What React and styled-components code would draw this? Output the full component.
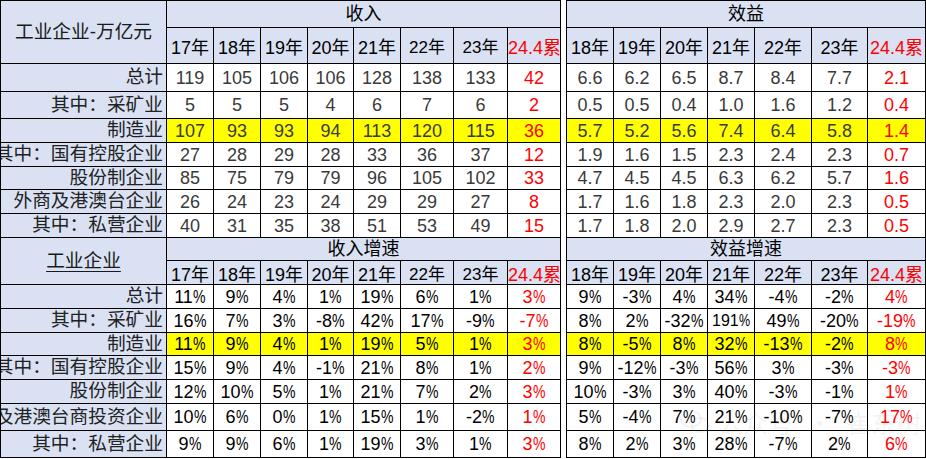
import React from "react";
import styled, { createGlobalStyle } from "styled-components";

const GlobalStyle = createGlobalStyle`
  html, body {
    margin: 0;
    padding: 0;
    background: #ffffff;
  }
  body {
    font-family: "Liberation Sans", "Noto Sans CJK SC", sans-serif;
  }
`;

const BLUE = "#d9e1f2";
const YELLOW = "#ffff00";
const RED = "#ff0000";

const Wrap = styled.div`
  position: relative;
  width: 926px;
  height: 459px;
  overflow: hidden;
`;

const Table = styled.table`
  border-collapse: collapse;
  table-layout: fixed;
  width: 925px;
  font-family: "Liberation Sans", "Noto Sans CJK SC", sans-serif;
`;

const Row = styled.tr`
  height: ${(p) => p.$h}px;
`;

const Cell = styled.td`
  border: 1px solid #000;
  padding: 0;
  line-height: 1;
  vertical-align: middle;
  text-align: center;
  white-space: nowrap;
  overflow: hidden;
  font-size: ${(p) => p.$size || 18}px;
  color: ${(p) => p.$color || "#111"};
  background: ${(p) => p.$bg || "#fff"};
`;

const HeadCell = styled(Cell)`
  background: ${BLUE};
  color: ${(p) => p.$color || "#000"};
  padding-top: ${(p) => p.$pt || 0}px;
`;

const TitleCell = styled(HeadCell)`
  font-size: 18.7px;
  color: #1a1a1a;
  text-decoration: ${(p) => (p.$underline ? "underline" : "none")};
  text-underline-offset: 4px;
`;

const LabelCell = styled.td`
  border: 1px solid #000;
  background: ${BLUE};
  padding: 0 3px 0 0;
  line-height: 1;
  font-size: 18.7px;
  color: #222;
  white-space: nowrap;
  overflow: hidden;
  direction: rtl;
  text-align: right;
`;

const LabelText = styled.span`
  direction: ltr;
  unicode-bidi: isolate;
`;

const Pct = styled.span`
  display: inline-block;
  transform: scaleX(0.78);
  transform-origin: left center;
  margin-right: -3px;
`;

const Spacer = styled.td`
  border-left: 1px solid #000;
  border-right: 1px solid #000;
  border-top: none;
  border-bottom: none;
  background: #fff;
  padding: 0;
`;

const Watermark = styled.div`
  position: absolute;
  left: 680px;
  top: 404px;
  display: flex;
  align-items: center;
  gap: 8px;
  font-family: "Noto Sans CJK SC", sans-serif;
  font-size: 25px;
  color: rgba(120, 120, 120, 0.09);
  pointer-events: none;
`;

const Dot = styled.span`
  margin: 0 6px;
`;

const incomeYears = ["17年", "18年", "19年", "20年", "21年", "22年", "23年"];
const effYears = ["18年", "19年", "20年", "21年", "22年", "23年"];
const colWidths = [166, 47, 47, 47, 46, 47, 53, 54, 53, 6, 47, 47, 47, 47, 57, 56, 58];

const table1 = [
  { label: "总计", h: 28, inc: [119, 105, 106, 106, 128, 138, 133, 42], eff: ["6.6", "6.2", "6.5", "8.7", "8.4", "7.7", "2.1"] },
  { label: "其中：采矿业", h: 27, inc: [5, 5, 5, 4, 6, 7, 6, 2], eff: ["0.5", "0.5", "0.4", "1.0", "1.6", "1.2", "0.4"] },
  { label: "制造业", h: 24, hl: true, inc: [107, 93, 93, 94, 113, 120, 115, 36], eff: ["5.7", "5.2", "5.6", "7.4", "6.4", "5.8", "1.4"] },
  { label: "其中：国有控股企业", h: 24, inc: [27, 28, 29, 28, 33, 36, 37, 12], eff: ["1.9", "1.6", "1.5", "2.3", "2.4", "2.3", "0.7"] },
  { label: "股份制企业", h: 23, inc: [85, 75, 79, 79, 96, 105, 102, 33], eff: ["4.7", "4.5", "4.5", "6.3", "6.2", "5.7", "1.6"] },
  { label: "外商及港澳台企业", h: 24, inc: [26, 24, 23, 24, 29, 29, 27, 8], eff: ["1.7", "1.6", "1.8", "2.3", "2.0", "2.3", "0.5"] },
  { label: "其中：私营企业", h: 24, inc: [40, 31, 35, 38, 51, 53, 49, 15], eff: ["1.7", "1.8", "2.0", "2.9", "2.7", "2.3", "0.5"] },
];

const table2 = [
  { label: "总计", h: 24, pct: true, inc: [11, 9, 4, 1, 19, 6, 1, 3], eff: [9, -3, 4, 34, -4, -2, 4] },
  { label: "其中：采矿业", h: 24, pct: true, inc: [16, 7, 3, -8, 42, 17, -9, -7], eff: [8, 2, -32, 191, 49, -20, -19] },
  { label: "制造业", h: 23, pct: true, hl: true, inc: [11, 9, 4, 1, 19, 5, 1, 3], eff: [8, -5, 8, 32, -13, -2, 8] },
  { label: "其中：国有控股企业", h: 24, pct: true, inc: [15, 9, 4, -1, 21, 8, 1, 2], eff: [9, -12, -3, 56, 3, -3, -3] },
  { label: "股份制企业", h: 24, pct: true, inc: [12, 10, 5, 1, 21, 7, 2, 3], eff: [10, -3, 3, 40, -3, -1, 1] },
  { label: "外商及港澳台商投资企业", h: 27, pct: true, inc: [10, 6, 0, 1, 15, 1, -2, 1], eff: [5, -4, 7, 21, -10, -7, 17] },
  { label: "其中：私营企业", h: 27, pct: true, inc: [9, 9, 6, 1, 19, 3, 1, 3], eff: [8, 2, 3, 28, -7, 2, 6] },
];

const HeaderRows = ({ title, incTitle, effTitle, h1, h2, underline }) => (
  <>
    <Row $h={h1}>
      <TitleCell rowSpan={2} $underline={underline}>{title}</TitleCell>
      <HeadCell colSpan={8}>{incTitle}</HeadCell>
      <Spacer />
      <HeadCell colSpan={7}>{effTitle}</HeadCell>
    </Row>
    <Row $h={h2}>
      {incomeYears.map((y, i) => (
        <HeadCell key={"i" + y} $size={i >= 5 ? 17 : 18} $pt={4}>{y}</HeadCell>
      ))}
      <HeadCell $color={RED} $pt={4}>24.4累</HeadCell>
      <Spacer />
      {effYears.map((y) => (
        <HeadCell key={"e" + y} $pt={4}>{y}</HeadCell>
      ))}
      <HeadCell $color={RED} $pt={4}>24.4累</HeadCell>
    </Row>
  </>
);

const Value = ({ v, pct }) =>
  pct ? (
    <>
      {v}
      <Pct>%</Pct>
    </>
  ) : (
    v
  );

const DataRow = ({ row, color }) => {
  const bg = row.hl ? YELLOW : "#fff";
  return (
    <Row $h={row.h}>
      <LabelCell>
        <LabelText>{row.label}</LabelText>
      </LabelCell>
      {row.inc.map((v, i) => (
        <Cell key={"i" + i} $bg={bg} $color={i === 7 ? RED : color}>
          <Value v={v} pct={row.pct} />
        </Cell>
      ))}
      <Spacer />
      {row.eff.map((v, i) => (
        <Cell
          key={"e" + i}
          $bg={bg}
          $color={i === 6 ? RED : color}
          $size={row.pct && v >= 100 ? 16 : 18}
        >
          <Value v={v} pct={row.pct} />
        </Cell>
      ))}
    </Row>
  );
};

const WeChatIcon = () => (
  <svg width="30" height="26" viewBox="0 0 30 26" fill="none" stroke="currentColor" strokeWidth="2">
    <ellipse cx="11" cy="10" rx="10" ry="8" />
    <ellipse cx="20" cy="16" rx="8.5" ry="7" />
  </svg>
);

export default function App() {
  return (
    <>
      <GlobalStyle />
      <Wrap>
        <Table>
          <colgroup>
            {colWidths.map((w, i) => (
              <col key={i} style={{ width: w }} />
            ))}
          </colgroup>
          <tbody>
            <HeaderRows title="工业企业-万亿元" incTitle="收入" effTitle="效益" h1={27} h2={36} />
            {table1.map((r) => (
              <DataRow key={"a" + r.label} row={r} color="#3a3a3a" />
            ))}
            <HeaderRows title="工业企业" incTitle="收入增速" effTitle="效益增速" h1={23} h2={24} underline />
            {table2.map((r) => (
              <DataRow key={"b" + r.label} row={r} color="#000" />
            ))}
          </tbody>
        </Table>
        <Watermark>
          <WeChatIcon />
          <span>公众号</span>
          <Dot>·</Dot>
          <span>崔东树</span>
        </Watermark>
      </Wrap>
    </>
  );
}
